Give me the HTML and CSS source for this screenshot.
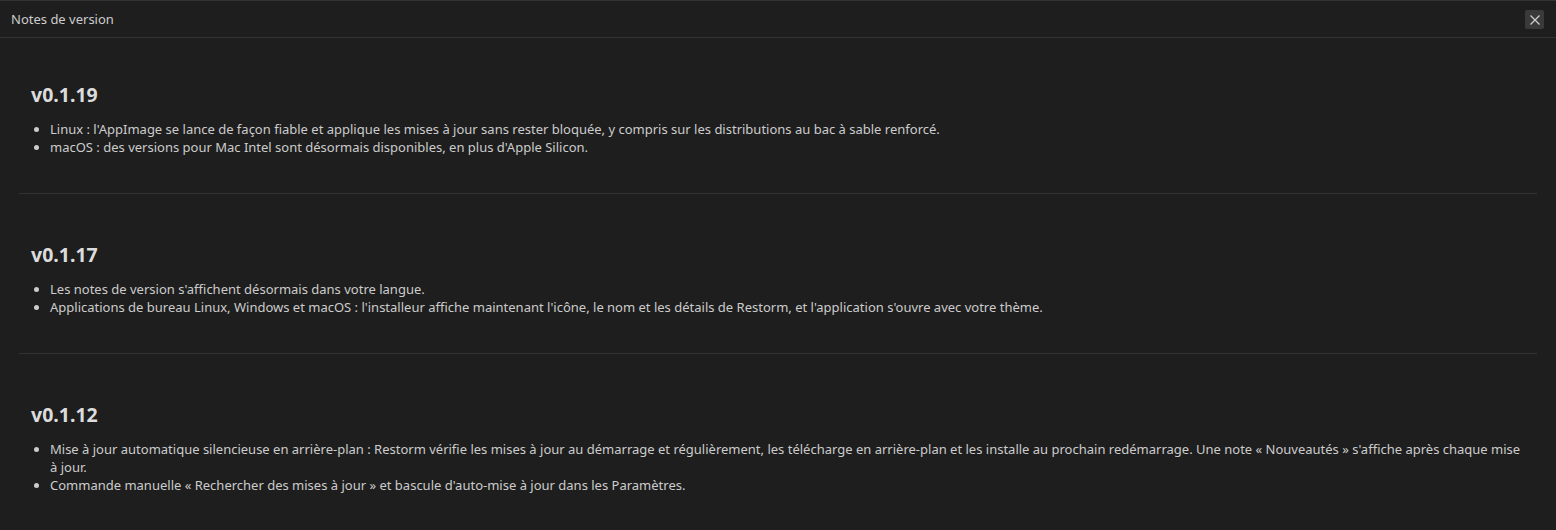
FILE: index.html
```html
<!DOCTYPE html>
<html lang="fr">
<head>
<meta charset="utf-8">
<title>Notes de version</title>
<link rel="stylesheet" href="styles.css">
</head>
<body>
<div class="window">
  <header class="titlebar">
    <span class="title">Notes de version</span>
    <button class="close" aria-label="Fermer">
      <svg width="12" height="12" viewBox="0 0 12 12"><path d="M1.5 1.5 L10.5 10.5 M10.5 1.5 L1.5 10.5" stroke="#d0d0d0" stroke-width="1.2" fill="none"/></svg>
    </button>
  </header>
  <main class="content">
    <section class="release">
      <h2>v0.1.19</h2>
      <ul>
        <li>Linux : l'AppImage se lance de façon fiable et applique les mises à jour sans rester bloquée, y compris sur les distributions au bac à sable renforcé.</li>
        <li>macOS : des versions pour Mac Intel sont désormais disponibles, en plus d'Apple Silicon.</li>
      </ul>
    </section>
    <section class="release">
      <h2>v0.1.17</h2>
      <ul>
        <li>Les notes de version s'affichent désormais dans votre langue.</li>
        <li>Applications de bureau Linux, Windows et macOS : l'installeur affiche maintenant l'icône, le nom et les détails de Restorm, et l'application s'ouvre avec votre thème.</li>
      </ul>
    </section>
    <section class="release">
      <h2>v0.1.12</h2>
      <ul>
        <li>Mise à jour automatique silencieuse en arrière-plan : Restorm vérifie les mises à jour au démarrage et régulièrement, les télécharge en arrière-plan et les installe au prochain redémarrage. Une note « Nouveautés » s'affiche après chaque mise à jour.</li>
        <li>Commande manuelle « Rechercher des mises à jour » et bascule d'auto-mise à jour dans les Paramètres.</li>
      </ul>
    </section>
  </main>
</div>
</body>
</html>
```
FILE: styles.css
```css
html, body {
  margin: 0;
  padding: 0;
  background: #1e1e1e;
  height: 100%;
  overflow: hidden;
}
body {
  font-family: "Noto Sans", "Open Sans", sans-serif;
  color: #cccccc;
}
.window {
  border-top: 1px solid #333333;
  min-height: 100%;
  box-sizing: border-box;
}
.titlebar {
  height: 36px;
  display: flex;
  align-items: center;
  justify-content: space-between;
  padding: 0 12px 0 11px;
  border-bottom: 1px solid #333333;
  box-sizing: content-box;
}
.title {
  font-size: 13px;
  color: #cccccc;
}
.close {
  width: 19px;
  height: 19px;
  margin-top: 1px;
  padding: 0;
  border: none;
  border-radius: 2px;
  background: #3a3a3a;
  display: flex;
  align-items: center;
  justify-content: center;
  cursor: pointer;
}
.content {
  padding: 0 19px;
}
.release {
  padding: 48px 12px 37px;
  border-top: 1px solid #333333;
}
.release:first-child {
  border-top: none;
  padding-top: 44px;
}
.release h2 {
  margin: 0 0 13px;
  padding-top: 1px;
  font-size: 19.5px;
  line-height: 24px;
  font-weight: 700;
  color: #dcdcdc;
}
.release ul {
  margin: 0;
  padding-left: 19px;
}
.release li {
  font-size: 13px;
  line-height: 18px;
}
```
